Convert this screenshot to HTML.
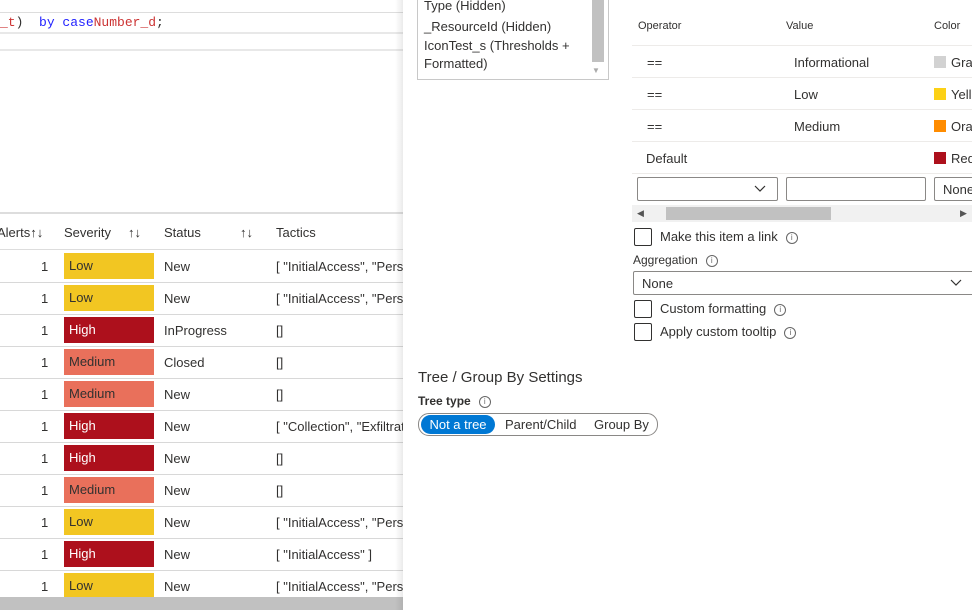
<!DOCTYPE html>
<html><head><style>
body{margin:0;width:972px;height:610px;overflow:hidden;position:relative;font-family:"Liberation Sans",sans-serif;font-size:13px;color:#323130;background:#fff}
.a{position:absolute;white-space:nowrap}
.mono{font-family:"Liberation Mono",monospace;font-size:13px}
.row{position:absolute;left:0;width:403px;height:32px;border-bottom:1px solid #d8d8d8;overflow:hidden;white-space:nowrap}
.row span{position:absolute;top:9px}
.sev{position:absolute;left:64px;top:3px;width:90px;height:26px;line-height:26px;padding-left:5px;box-sizing:border-box}
.L{background:#f2c622;color:#323130}.H{background:#ad101c;color:#fff}.M{background:#e9705b;color:#323130}
.cb{position:absolute;width:16px;height:16px;border:1px solid #323130;border-radius:2px}
.info{display:inline-block;width:10px;height:10px;border:1px solid #666;border-radius:50%;font-size:8px;line-height:10px;text-align:center;color:#666;margin-left:8px;vertical-align:1px}
.tr{position:absolute;left:632px;width:340px;height:31px;border-bottom:1px solid #edebe9;overflow:hidden;white-space:nowrap}
.tr span{position:absolute;top:9px}
.sw{display:inline-block;width:12px;height:12px;vertical-align:-1px;margin-right:5px}
</style></head><body>
<!-- left -->
<div class="a" style="left:0;top:12px;width:403px;height:1px;background:#ddd"></div>
<div class="a mono" style="left:0;top:15px;white-space:pre"><span style="color:#c33">_t</span>)  <span style="color:#22f">by case</span><span style="color:#c33">Number_d</span>;</div>
<div class="a" style="left:0;top:32px;width:403px;height:2px;background:#e8e8e8"></div>
<div class="a" style="left:0;top:49px;width:403px;height:2px;background:#e8e8e8"></div>
<div class="a" style="left:0;top:212px;width:403px;height:2px;background:#ddd"></div>
<div class="a" style="left:0;top:214px;width:403px;height:35px;border-bottom:1px solid #ddd">
<span class="a" style="left:-3px;top:11px">Alerts↑↓</span>
<span class="a" style="left:64px;top:11px">Severity</span><span class="a" style="left:128px;top:11px">↑↓</span>
<span class="a" style="left:164px;top:11px">Status</span><span class="a" style="left:240px;top:11px">↑↓</span>
<span class="a" style="left:276px;top:11px">Tactics</span></div>
<div class="row" style="top:250px"><span style="left:41px">1</span><div class="sev L">Low</div><span style="left:164px">New</span><span style="left:276px">[ "InitialAccess", "Persis</span></div>
<div class="row" style="top:282px"><span style="left:41px">1</span><div class="sev L">Low</div><span style="left:164px">New</span><span style="left:276px">[ "InitialAccess", "Persis</span></div>
<div class="row" style="top:314px"><span style="left:41px">1</span><div class="sev H">High</div><span style="left:164px">InProgress</span><span style="left:276px">[]</span></div>
<div class="row" style="top:346px"><span style="left:41px">1</span><div class="sev M">Medium</div><span style="left:164px">Closed</span><span style="left:276px">[]</span></div>
<div class="row" style="top:378px"><span style="left:41px">1</span><div class="sev M">Medium</div><span style="left:164px">New</span><span style="left:276px">[]</span></div>
<div class="row" style="top:410px"><span style="left:41px">1</span><div class="sev H">High</div><span style="left:164px">New</span><span style="left:276px">[ "Collection", "Exfiltrat</span></div>
<div class="row" style="top:442px"><span style="left:41px">1</span><div class="sev H">High</div><span style="left:164px">New</span><span style="left:276px">[]</span></div>
<div class="row" style="top:474px"><span style="left:41px">1</span><div class="sev M">Medium</div><span style="left:164px">New</span><span style="left:276px">[]</span></div>
<div class="row" style="top:506px"><span style="left:41px">1</span><div class="sev L">Low</div><span style="left:164px">New</span><span style="left:276px">[ "InitialAccess", "Persis</span></div>
<div class="row" style="top:538px"><span style="left:41px">1</span><div class="sev H">High</div><span style="left:164px">New</span><span style="left:276px">[ "InitialAccess" ]</span></div>
<div class="row" style="top:570px;border:0"><span style="left:41px">1</span><div class="sev L">Low</div><span style="left:164px">New</span><span style="left:276px">[ "InitialAccess", "Persis</span></div>
<div class="a" style="left:0;top:597px;width:403px;height:13px;background:#c1c1c1"></div>
<!-- right panel -->
<div class="a" style="left:395px;top:0;width:8px;height:610px;background:linear-gradient(to right,rgba(0,0,0,0),rgba(0,0,0,0.08))"></div>
<div class="a" style="left:403px;top:0;width:569px;height:610px;background:#fff;overflow:hidden">
<div class="a" style="left:14px;top:-2px;width:184px;height:80px;border:1px solid #c8c8c8;line-height:21px;padding-left:6px;box-sizing:content-box;white-space:normal">
<div style="margin-top:-4px">Type (Hidden)</div><div>_ResourceId (Hidden)</div><div style="line-height:18px">IconTest_s (Thresholds +<br>Formatted)</div></div>
<div class="a" style="left:189px;top:0;width:12px;height:62px;background:#c1c1c1"></div>
<div class="a" style="left:189px;top:66px;font-size:8px;color:#aaa">▼</div>
<div class="a" style="left:235px;top:20px;font-size:11px">Operator</div>
<div class="a" style="left:383px;top:20px;font-size:11px">Value</div>
<div class="a" style="left:531px;top:20px;font-size:11px">Color</div>
<div class="a" style="left:229px;top:45px;width:340px;height:1px;background:#edebe9"></div>
<div class="tr" style="left:229px;top:46px"><span style="left:15px">==</span><span style="left:162px">Informational</span><span style="left:302px"><i class="sw" style="background:#d2d2d2"></i>Gray</span></div>
<div class="tr" style="left:229px;top:78px"><span style="left:15px">==</span><span style="left:162px">Low</span><span style="left:302px"><i class="sw" style="background:#fcd116"></i>Yellow</span></div>
<div class="tr" style="left:229px;top:110px"><span style="left:15px">==</span><span style="left:162px">Medium</span><span style="left:302px"><i class="sw" style="background:#ff8c00"></i>Orange</span></div>
<div class="tr" style="left:229px;top:142px"><span style="left:14px">Default</span><span style="left:302px"><i class="sw" style="background:#ad101c"></i>Red</span></div>
<div class="a" style="left:234px;top:177px;width:139px;height:22px;border:1px solid #8a8886;border-radius:2px"><svg class="a" style="left:116px;top:7px" width="12" height="8"><path d="M1 1l5 5 5-5" fill="none" stroke="#323130" stroke-width="1.2"/></svg></div>
<div class="a" style="left:383px;top:177px;width:138px;height:22px;border:1px solid #8a8886;border-radius:2px"></div>
<div class="a" style="left:531px;top:177px;width:50px;height:22px;border:1px solid #8a8886;border-radius:2px"><span class="a" style="left:8px;top:4px">None</span></div>
<div class="a" style="left:229px;top:205px;width:340px;height:17px;background:#f1f1f1"></div>
<div class="a" style="left:263px;top:207px;width:165px;height:13px;background:#c1c1c1"></div>
<div class="a" style="left:234px;top:208px;font-size:9px;color:#555">◀</div>
<div class="a" style="left:557px;top:208px;font-size:9px;color:#555">▶</div>
<div class="cb" style="left:231px;top:228px"></div>
<div class="a" style="left:257px;top:229px">Make this item a link<span class="info">i</span></div>
<div class="a" style="left:230px;top:253px;font-size:12px">Aggregation<span class="info">i</span></div>
<div class="a" style="left:230px;top:271px;width:345px;height:22px;border:1px solid #8a8886;border-radius:2px"><span class="a" style="left:8px;top:4px">None</span><svg class="a" style="left:316px;top:7px" width="12" height="8"><path d="M1 1l5 5 5-5" fill="none" stroke="#323130" stroke-width="1.2"/></svg></div>
<div class="cb" style="left:231px;top:300px"></div>
<div class="a" style="left:257px;top:301px">Custom formatting<span class="info">i</span></div>
<div class="cb" style="left:231px;top:323px"></div>
<div class="a" style="left:257px;top:324px">Apply custom tooltip<span class="info">i</span></div>
<div class="a" style="left:15px;top:369px;font-size:15px">Tree / Group By Settings</div>
<div class="a" style="left:15px;top:394px;font-size:12px;font-weight:bold">Tree type<span class="info" style="font-weight:normal">i</span></div>
<div class="a" style="left:15px;top:413px;width:238px;height:21px;border:1px solid #8a8886;border-radius:11px"></div>
<div class="a" style="left:18px;top:415px;width:74px;height:19px;background:#0078d4;border-radius:10px;color:#fff;text-align:center;line-height:19px">Not a tree</div>
<div class="a" style="left:102px;top:417px">Parent/Child</div>
<div class="a" style="left:191px;top:417px">Group By</div>
</div>
</body></html>
